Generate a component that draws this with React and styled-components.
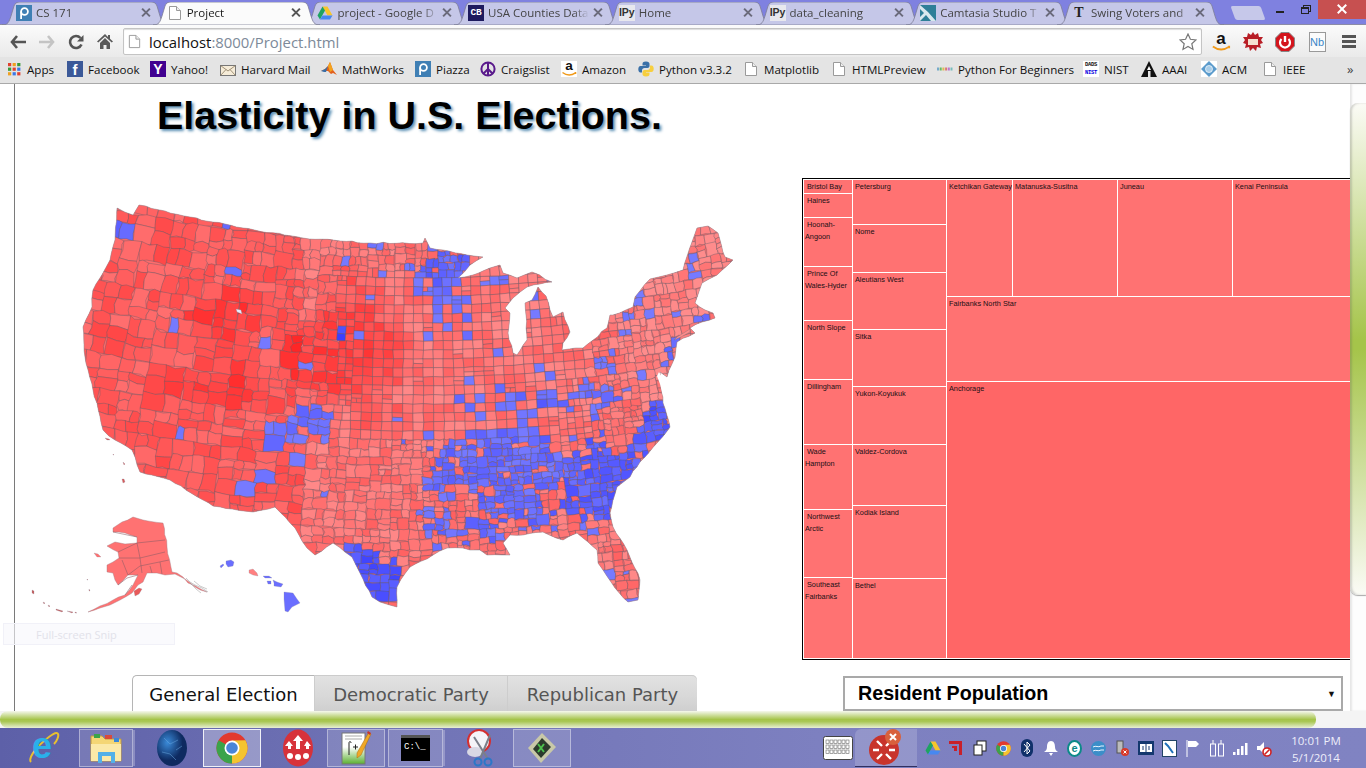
import styled, { createGlobalStyle } from 'styled-components';

const GlobalStyle = createGlobalStyle`
  html, body { margin: 0; padding: 0; overflow: hidden; }
  * { box-sizing: border-box; }
`;

/* ---------- styled parts ---------- */
const Screen = styled.div`
  width: 1366px;
  height: 768px;
  display: flex;
  flex-direction: column;
  overflow: hidden;
  background: #fff;
  font-family: 'Open Sans', 'Liberation Sans', sans-serif;
`;
const TabStrip = styled.div`
  height: 25px;
  flex: none;
  display: flex;
  padding: 2px 0 0 2px;
  background: #7f81e0;
  position: relative;
  border-bottom: 1px solid #8c8ca6;
`;
const Tab = styled.div`
  position: relative;
  flex: none;
  width: 167px;
  height: 23px;
  margin-right: -16.3px;
  padding: 0 19px 2px 14px;
  display: flex;
  align-items: center;
  gap: 4px;
  z-index: ${(p) => (p.$active ? 2 : 1)};
  color: ${(p) => (p.$active ? '#1a1a1a' : '#444')};
`;
const TabShape = styled.svg`
  position: absolute;
  left: 0;
  top: 0;
`;
const TabIcon = styled.span`
  position: relative;
  flex: none;
  width: 16px;
  height: 16px;
  display: flex;
`;
const TabTitle = styled.span`
  position: relative;
  flex: 1;
  min-width: 0;
  font-size: 11.5px;
  white-space: nowrap;
  overflow: hidden;
  -webkit-mask-image: linear-gradient(90deg, #000 85%, transparent);
  mask-image: linear-gradient(90deg, #000 85%, transparent);
`;
const TabClose = styled.span`
  position: relative;
  flex: none;
  width: 9px;
  height: 9px;
  &::before, &::after {
    content: '';
    position: absolute;
    left: 3.5px;
    top: -1px;
    width: 2px;
    height: 11px;
    background: ${(p) => (p.$active ? '#555' : '#6a6a7a')};
  }
  &::before { transform: rotate(45deg); }
  &::after { transform: rotate(-45deg); }
`;
const NewTab = styled.div`
  flex: none;
  width: 30px;
  height: 14px;
  margin: 4px 0 0 25px;
  background: #c6c8ea;
  border-radius: 2px;
  transform: skewX(20deg);
`;
const WindowControls = styled.div`
  margin-left: auto;
  margin-top: -2px;
  height: 19px;
  display: flex;
  align-items: flex-start;
  flex: none;
`;
const MinButton = styled.div`
  width: 8px;
  height: 2px;
  margin: 11px 17px 0 0;
  background: #222;
`;
const RestoreButton = styled.div`
  width: 8px;
  height: 7px;
  margin: 7px 9px 0 0;
  border: 1px solid #222;
  border-top-width: 2px;
  box-shadow: 2px -2px 0 -1px #7f81e0, 2px -2px 0 0 #222;
`;
const CloseButton = styled.div`
  width: 48px;
  height: 19px;
  background: #c75050;
  position: relative;
  &::before, &::after {
    content: '';
    position: absolute;
    left: 23px;
    top: 3px;
    width: 2px;
    height: 12px;
    background: #fff;
  }
  &::before { transform: rotate(45deg); }
  &::after { transform: rotate(-45deg); }
`;
const Toolbar = styled.div`
  height: 32px;
  flex: none;
  display: flex;
  align-items: center;
  padding: 1px 0 0 3px;
  background: linear-gradient(#fbfbfb, #eaeaea);
`;
const NavButton = styled.div`
  flex: none;
  width: 29px;
  display: flex;
  justify-content: center;
  align-items: center;
`;
const Omnibox = styled.div`
  flex: none;
  width: 1079px;
  height: 27px;
  margin: 0 3px 0 4px;
  padding: 0 4px 0 3px;
  display: flex;
  align-items: center;
  gap: 7px;
  background: #fff;
  border: 1px solid #c4c4c4;
  border-radius: 2px;
  box-shadow: inset 0 1px 1px #ddd;
`;
const UrlText = styled.span`
  flex: 1;
  font-size: 14.9px;
  color: #7d8a99;
  b { font-weight: 400; color: #111; }
`;
const ExtButton = styled.div`
  flex: none;
  width: 32px;
  display: flex;
  justify-content: center;
  align-items: center;
`;
const NbBox = styled.span`
  width: 17px;
  height: 20px;
  display: flex;
  align-items: center;
  justify-content: center;
  background: #fbfbfb;
  border: 1px solid #999;
  color: #3a86c8;
  font: 11px 'Liberation Sans', sans-serif;
`;
const BookmarkBar = styled.div`
  height: 27px;
  flex: none;
  display: flex;
  align-items: center;
  padding: 0 0 2px 6px;
  background: #e4e4e4;
  border-bottom: 1px solid #a9a9a9;
`;
const Bookmark = styled.div`
  flex: none;
  width: ${(p) => p.$w}px;
  display: flex;
  align-items: center;
  gap: 5px;
  font-size: 11.6px;
  color: #111;
  white-space: nowrap;
`;
const BookmarkIcon = styled.span`
  flex: none;
  width: 16px;
  height: 16px;
  display: flex;
`;
const Chevron = styled.span`
  margin-left: 25px;
  font-size: 13px;
  color: #444;
`;
const FavBox = styled.span`
  width: 16px;
  height: 16px;
  display: flex;
  align-items: ${(p) => p.$align || 'center'};
  justify-content: center;
  overflow: hidden;
  background: ${(p) => p.$bg};
  color: ${(p) => p.$fg};
  font-family: ${(p) => (p.$mono ? "'Liberation Mono', monospace" : p.$serif ? "'Liberation Serif', serif" : "'Liberation Sans', sans-serif")};
  font-size: ${(p) => p.$size};
  font-weight: 700;
  line-height: 1;
`;
const AmazonBox = styled.span`
  position: relative;
  width: ${(p) => p.$s}px;
  height: ${(p) => p.$s}px;
  display: flex;
  background: ${(p) => (p.$s > 16 ? 'transparent' : '#fff')};
`;
const AmazonLetter = styled.span`
  position: absolute;
  left: 0;
  right: 0;
  top: -3px;
  text-align: center;
  font: 700 ${(p) => p.$s * 0.85}px 'Liberation Sans', sans-serif;
  color: #111;
`;
const NistBox = styled.span`
  width: 16px;
  height: 16px;
  background: #fff;
  font: 700 5.500px/8px 'Liberation Mono', monospace;
  color: #111;
  display: flex;
  flex-direction: column;
  align-items: center;
  letter-spacing: -.3px;
`;
const NistLow = styled.span`
  color: #0000e0;
`;
const MiddleRow = styled.div`
  flex: 1;
  min-height: 0;
  display: flex;
`;
const Page = styled.div`
  position: relative;
  flex: none;
  width: 1350px;
  overflow: hidden;
  font-family: 'Liberation Sans', Arial, sans-serif;
`;
const Content = styled.div`
  margin-left: 14px;
  width: 1400px;
  height: 100%;
  border-left: 1px solid #7a7a7a;
`;
const Title = styled.h1`
  margin: 0;
  height: 94px;
  padding: 8px 0 0 142px;
  font-size: 39.5px;
  line-height: 46px;
  font-weight: 700;
  color: #000;
  text-shadow: 2px 2px 3px #5a8fb4;
`;
const Columns = styled.div`
  display: flex;
  align-items: flex-start;
`;
const LeftColumn = styled.div`
  flex: none;
  width: 787px;
`;
const MapSvg = styled.svg`
  display: block;
  width: 787px;
  height: 497px;
  filter: blur(0.35px);
`;
const ViewTabs = styled.div`
  margin-left: 117px;
  height: 36px;
  width: 565px;
  display: flex;
  border-radius: 5px 5px 0 0;
  overflow: hidden;
  background: linear-gradient(#e2e2e2, #d8d8d8 60%, #cfcfcf);
  box-shadow: inset 0 1px 0 #ccc;
`;
const ViewTab = styled.div`
  flex: none;
  width: ${(p) => p.$w}px;
  padding-top: 2px;
  display: flex;
  align-items: center;
  justify-content: center;
  font-family: 'DejaVu Sans', sans-serif;
  font-size: 18px;
  color: ${(p) => (p.$active ? '#111' : '#555')};
  background: ${(p) => (p.$active ? '#fff' : 'transparent')};
  border-left: 1px solid ${(p) => (p.$active ? '#b5b5b5' : '#cdcdcd')};
  border-top: 1px solid ${(p) => (p.$active ? '#b5b5b5' : 'transparent')};
  border-radius: ${(p) => (p.$active ? '5px 0 0 0' : '0')};
`;
const RightColumn = styled.div`
  flex: none;
  width: 560px;
`;
const Treemap = styled.div`
  width: 560px;
  height: 482px;
  display: flex;
  border: 1px solid #000;
  border-right: 0;
  background: #fff;
  padding: 1px 0 1px 1px;
`;
const TreeColumn = styled.div`
  flex: none;
  width: ${(p) => p.$w}px;
  display: flex;
  flex-direction: column;
`;
const TreeRow = styled.div`
  flex: none;
  height: ${(p) => p.$h}px;
  display: flex;
`;
const TreeCell = styled.div`
  flex: none;
  width: ${(p) => (p.$w ? p.$w + 'px' : 'auto')};
  height: ${(p) => (p.$h ? p.$h + 'px' : 'auto')};
  padding: 1px 0 0 ${(p) => (p.$indent ? '1px' : '2px')};
  background: ${(p) => (p.$strong ? '#ff6666' : '#ff7272')};
  border-right: 1px solid #fff;
  border-bottom: ${(p) => (p.$last ? 0 : '1px solid #fff')};
  font-size: 7.3px;
  line-height: 12px;
  color: #201014;
  overflow: hidden;
  white-space: ${(p) => (p.$indent ? 'normal' : 'nowrap')};
  text-indent: ${(p) => (p.$indent ? '2px' : 0)};
`;
const PopulationSelect = styled.div`
  margin: 16px 0 0 41px;
  width: 500px;
  height: 35px;
  display: flex;
  align-items: center;
  justify-content: space-between;
  padding: 0 5px 0 13px;
  border: 2px solid #a9a9a9;
  font-size: 19.7px;
  font-weight: 700;
  color: #000;
`;
const SelectArrow = styled.span`
  font-size: 9px;
  color: #111;
`;
const SnipHint = styled.div`
  position: absolute;
  left: 3px;
  top: 539px;
  width: 172px;
  height: 22px;
  padding-left: 32px;
  display: flex;
  align-items: center;
  font-family: 'Open Sans', sans-serif;
  font-size: 11px;
  color: #e2e2ea;
  background: rgba(246, 246, 252, 0.6);
  border: 1px solid #f1f1f8;
`;
const VScroll = styled.div`
  flex: none;
  width: 16px;
  padding-top: 19px;
  background: #fdfdfd;
  box-shadow: inset 2px 0 2px #e6e6e6;
`;
const VThumb = styled.div`
  height: 492px;
  border-radius: 8px 0 0 8px;
  background: linear-gradient(#fbfbf6, #a5c44a 48%, #a5c44a 50%, #fbfbf6);
  box-shadow: inset 2px 0 2px rgba(90, 90, 90, 0.25), 0 1px 1px #aaa;
`;
const HScroll = styled.div`
  height: 17px;
  flex: none;
  display: flex;
  background: #f4f4f4;
`;
const HThumb = styled.div`
  width: 1316px;
  height: 100%;
  border-radius: 8px;
  background: linear-gradient(#f6f8ee, #a5c44a 50%, #a9c755 62%, #e8efd4);
`;
const Taskbar = styled.div`
  height: 40px;
  flex: none;
  display: flex;
  align-items: center;
  color: #eef;
  background: linear-gradient(90deg, #5d60a8, #7174b6 30%, #7d80c0 60%, #8083c2);
`;
const TaskButton = styled.div`
  flex: none;
  width: ${(p) => p.$w}px;
  height: 38px;
  margin-left: ${(p) => p.$ml}px;
  display: flex;
  align-items: center;
  justify-content: center;
  ${(p) => p.$state === 'active' && `
    background: rgba(255,255,255,.3);
    border: 1px solid rgba(255,255,255,.85);
  `}
  ${(p) => (p.$state === 'open' || p.$state === 'stack') && `
    background: rgba(255,255,255,.14);
    border: 1px solid rgba(255,255,255,.4);
  `}
  ${(p) => p.$state === 'stack' && `
    box-shadow: 3px 0 0 -1px rgba(255,255,255,.25);
  `}
`;
const IeBox = styled.span`
  position: relative;
  width: 32px;
  height: 34px;
  display: flex;
`;
const IeLetter = styled.span`
  position: absolute;
  left: 4px;
  top: -6px;
  font: 700 36px 'Liberation Sans', sans-serif;
  color: #2ab0ea;
`;
const CmdBox = styled.span`
  width: 29px;
  height: 26px;
  padding: 4px 0 0 3px;
  background: #000;
  border-top: 3px solid #555;
  color: #fff;
  font: 9px/10px 'Liberation Mono', monospace;
`;
const TraySection = styled.div`
  margin-left: auto;
  display: flex;
  align-items: center;
  height: 100%;
`;
const KeyboardSlot = styled.div`
  flex: none;
  width: 34px;
  display: flex;
  justify-content: center;
`;
const ClusterBox = styled.span`
  width: 62px;
  height: 38px;
  display: flex;
  justify-content: center;
  align-items: center;
  background: rgba(255, 255, 255, 0.17);
  border-radius: 6px 0 0 0;
  border-bottom: 1px solid #303060;
`;
const TrayList = styled.div`
  margin-left: 4px;
  display: flex;
`;
const TrayItem = styled.div`
  flex: none;
  width: 23.7px;
  height: 20px;
  display: flex;
  align-items: center;
  justify-content: center;
`;
const TrayDisc = styled.span`
  width: 15px;
  height: 17px;
  border-radius: 50%;
  display: flex;
  align-items: center;
  justify-content: center;
  background: #fff;
  border: 2px solid ${(p) => p.$bg};
  color: ${(p) => p.$bg};
  font: 700 11px 'Liberation Sans', sans-serif;
`;
const Clock = styled.div`
  flex: none;
  width: 74px;
  margin: 0 13px 0 3px;
  padding-top: 2px;
  text-align: center;
  font-size: 11.5px;
  line-height: 17px;
  color: #eeeefa;
`;

/* ---------- map generation ---------- */
const hash = (a, b) => {
  let h = (Math.round(a) * 374761393 + Math.round(b) * 668265263) >>> 0;
  h = (Math.imul(h ^ (h >>> 13), 1274126177)) >>> 0;
  return ((h ^ (h >>> 16)) >>> 0) / 4294967296;
};

const CONUS = [[117,208],[133,215],[139,205],[190,217],[243,228],[303,238],[370,243],[423,243],[425,238],[430,248],[443,250],[467,255],[483,257],[470,265],[458,278],[473,275],[490,268],[500,265],[503,273],[517,278],[532,272],[552,282],[540,284],[527,287],[513,298],[505,308],[510,313],[508,333],[513,353],[517,355],[527,340],[525,303],[532,300],[538,287],[546,296],[550,310],[553,317],[563,312],[570,332],[563,343],[562,350],[583,348],[607,328],[610,315],[613,315],[633,307],[635,297],[650,279],[667,275],[683,270],[692,242],[697,228],[708,226],[718,233],[725,257],[733,260],[717,275],[702,283],[695,303],[705,310],[713,313],[715,318],[702,322],[690,328],[695,333],[677,342],[675,357],[667,377],[660,372],[663,403],[670,427],[668,430],[657,443],[640,462],[630,477],[617,487],[610,513],[613,527],[627,550],[640,580],[638,600],[628,602],[615,588],[603,570],[598,563],[597,550],[588,542],[577,533],[563,540],[543,532],[523,535],[510,535],[503,543],[510,555],[487,555],[480,550],[470,550],[463,548],[447,548],[433,555],[410,567],[397,587],[397,607],[380,602],[372,597],[360,573],[352,557],[333,543],[315,555],[307,548],[295,528],[275,507],[253,512],[213,506],[170,480],[140,472],[132,450],[115,440],[103,430],[93,390],[85,357],[83,327],[92,307],[93,290],[103,273],[110,260],[115,240]];
const ALASKA = [[113,528],[122,522],[133,517],[143,520],[163,523],[167,547],[172,572],[177,573],[183,577],[188,583],[207,592],[195,587],[185,579],[175,574],[165,575],[157,573],[147,573],[143,582],[138,585],[132,593],[120,600],[110,605],[100,608],[88,612],[100,606],[113,600],[125,595],[133,585],[138,575],[128,575],[118,585],[115,580],[113,573],[107,572],[107,565],[113,562],[119,558],[118,552],[107,546],[115,542],[125,544],[137,543],[137,537],[125,533],[113,532]];
const ISLANDS = [
  { d: 'M226 561l5-1 3 2-1 4-5 1-2-3z', fill: '#6a6eff' },
  { d: 'M220 566l3-2 1 1-3 3z', fill: '#6a6eff' },
  { d: 'M249 570l4-1 4 4 1 3-5-1-4-2z', fill: '#ff8080' },
  { d: 'M263 576l6 0 3 2-7 0z', fill: '#6a6eff' },
  { d: 'M267 581l4 0 0 3-3 0z', fill: '#6a6eff' },
  { d: 'M273 580l4 2 6 2-2 3-7-1 0-3z', fill: '#6a6eff' },
  { d: 'M284 592l9 1 4 6 3 4-8 4-4 5-3-1-1-12z', fill: '#6a6eff' },
  { d: 'M94 553l4 1 3 3-4 0z', fill: '#ff7070' },
  { d: 'M134 591l5-3 3 1-3 5-4 2z', fill: '#e85a5a' },
  { d: 'M32 590l2 1 0 3-2-1zM43 602l2 1-1 1zM48 605l2 1-1 1zM56 609l7 2-1 1-6-2zM67 611l6 1-1 1zM75 612l2 1-2 0zM87 579l1 1-1 0zM89 589l1 2-1 0z', fill: '#c85a5a' },
  { d: 'M105 438l4 1 1 1-3 0zM113 454l1 1-1 0zM123 462l2 2-1 1zM122 479l2 0 1 3-2 1z', fill: '#d85a5a' },
];
const ALASKA_LINES = 'M113 532L137 537M118 552L137 543L165 540M137 543L140 558L119 558M140 558L165 552M140 558L142 573M128 575L140 566L169 560M150 566L152 573M160 562L162 574M122 560L128 575M118 585L127 578L138 575M125 595L132 585';

const toPath = (pts) => {
  const out = [];
  pts.forEach((p, i) => {
    const q = pts[(i + 1) % pts.length];
    out.push(p);
    const n = Math.floor(Math.hypot(q[0] - p[0], q[1] - p[1]) / 6);
    for (let k = 1; k < n; k++) {
      const t = k / n;
      out.push([
        p[0] + (q[0] - p[0]) * t + (hash(p[0] * 7 + k, q[1]) - 0.5) * 1.4,
        p[1] + (q[1] - p[1]) * t + (hash(p[1] * 5, q[0] + k) - 0.5) * 1.4,
      ]);
    }
  });
  return 'M' + out.map((p) => p[0].toFixed(1) + ' ' + p[1].toFixed(1)).join('L') + 'Z';
};

const warp = (u, v) => {
  const t = (u - 420) / 1400;
  const r = 1400 + v - 200;
  return [420 + r * Math.sin(t), r * Math.cos(t) - 1200];
};

const inPoly = (x, y, poly) => {
  let c = false;
  for (let i = 0, j = poly.length - 1; i < poly.length; j = i++) {
    const [xi, yi] = poly[i];
    const [xj, yj] = poly[j];
    if (yi > y !== yj > y && x < ((xj - xi) * (y - yi)) / (yj - yi) + xi) c = !c;
  }
  return c;
};

const isPlains = (x, y) => x > 335 && x < 590 && y > 270 && y < 440;

const targetSize = (x, y) => {
  if (x < 210) return 16;
  if (x < 290) return 14;
  if (x < 335) return 11;
  if (y > 450 && x < 420) return 9.5;
  if (x > 640 && y < 330) return 10;
  if (y < 275) return 8.5;
  if (isPlains(x, y)) return 8.4;
  return 8;
};

// x, y, rx, ry, chance, darkness
const BLUE = [
  [600,480,48,55,.95,.35],[655,425,22,26,.88,.45],[490,470,75,50,.92,.2],[440,510,35,30,.75,.15],[470,530,45,15,.8,.2],
  [520,510,35,25,.72,.25],[560,465,30,25,.82,.2],[530,440,50,28,.78,.2],[540,405,45,18,.62,.25],[605,365,15,12,.88,.05],[600,395,30,20,.62,.1],
  [373,578,28,28,1,.55],[355,555,12,12,.95,.45],[310,425,25,22,.78,.1],[283,432,20,14,.92,.15],[445,268,30,22,.97,.3],
  [425,285,30,25,.68,.05],[445,300,25,15,.62,.1],[490,280,25,10,.62,.05],[120,235,10,28,.75,.2],[100,370,8,12,.8,.1],
  [345,333,7,7,1,.6],[360,335,7,5,.9,.05],[232,272,7,6,.8,.05],[378,245,4,4,1,.05],[243,480,5,13,.85,.1],
  [300,520,10,15,.9,.1],[698,318,12,8,.7,.05],[672,350,10,20,.4,.2],[700,285,6,8,.5,.05],[625,568,6,7,.75,.05],
  [585,530,25,8,.78,.1],[640,445,14,12,.78,.3],
];
const RED = [[550,420,25,10,.15],[463,505,14,18,.2],[405,535,25,25,.15],[625,575,22,32,.3],[580,445,25,12,.4],[405,470,18,14,.5]];
const HOT = [[345,355,70,55,.42],[350,290,42,35,.22],[225,320,45,35,.25],[215,385,50,30,.25],[380,420,30,25,.18]];

const fall = (x, y, b) => {
  const d = ((x - b[0]) / b[2]) ** 2 + ((y - b[1]) / b[3]) ** 2;
  return d < 1 ? 1 - d * d : 0;
};

const cellColor = (x, y, seed) => {
  let p = x > 420 ? 0.07 : 0.012;
  let dark = 0.05;
  BLUE.forEach((b) => {
    const v = b[4] * fall(x, y, b);
    if (v > p) { p = v; dark = b[5]; }
  });
  RED.forEach((b) => { if (fall(x, y, b) > 0.3) p *= b[4]; });
  const n = hash(seed * 991, seed * 17);
  const n2 = hash(seed * 13, seed * 577);
  if (n < p) {
    const d = Math.min(1, Math.max(0, dark + (n2 - 0.55) * 0.4));
    return `rgb(${Math.round(118 - 80 * d)},${Math.round(122 - 80 * d)},255)`;
  }
  let l = x < 300 ? 0.42 : x > 620 && y < 400 ? 0.08 : 0.2;
  HOT.forEach((b) => { l += b[4] * fall(x, y, b); });
  l += (n2 - 0.5) * 0.34;
  l = Math.min(1, Math.max(0, l));
  const g = Math.round(140 - 118 * l);
  return `rgb(255,${g},${g})`;
};

const buildCells = () => {
  const cells = [];
  let seed = 1;
  const point = (u, v, amp) => {
    const [x, y] = warp(u, v);
    const k1 = u * 10;
    const k2 = v * 10;
    return [x + (hash(k1, k2) - 0.5) * amp, y + (hash(k2 + 3, k1 + 9) - 0.5) * amp];
  };
  const leaf = (u0, v0, u1, v1) => {
    const [x, y] = warp((u0 + u1) / 2, (v0 + v1) / 2);
    const plains = isPlains(x, y);
    const amp = plains ? 0.8 : x < 335 ? 3 : 2;
    const um = (u0 + u1) / 2;
    const vm = (v0 + v1) / 2;
    const pts = plains
      ? [[u0, v0], [u1, v0], [u1, v1], [u0, v1]]
      : [[u0, v0], [um, v0], [u1, v0], [u1, vm], [u1, v1], [um, v1], [u0, v1], [u0, vm]];
    const poly = pts.map((p) => point(p[0], p[1], amp));
    if (!poly.some((p) => inPoly(p[0], p[1], CONUS)) && !inPoly(x, y, CONUS)) return;
    seed += 1;
    cells.push({
      d: 'M' + poly.map((p) => p[0].toFixed(1) + ' ' + p[1].toFixed(1)).join('L') + 'Z',
      fill: cellColor(x, y, seed),
    });
  };
  const split = (u0, v0, u1, v1) => {
    const [x, y] = warp((u0 + u1) / 2, (v0 + v1) / 2);
    const t = targetSize(x, y);
    const w = u1 - u0;
    const h = v1 - v0;
    const r = hash(u0 * 3 + v1 * 7, v0 * 3 + u1 * 5);
    const limit = t * (1.05 + 0.4 * r);
    if (w < limit && h < limit) { leaf(u0, v0, u1, v1); return; }
    const f = isPlains(x, y) ? 0.5 : 0.36 + 0.28 * hash(u1 * 11, v1 * 13);
    if (w > h || (w === h && r > 0.5)) {
      const m = u0 + w * f;
      split(u0, v0, m, v1);
      split(m, v0, u1, v1);
    } else {
      const m = v0 + h * f;
      split(u0, v0, u1, m);
      split(u0, m, u1, v1);
    }
  };
  for (let u = 36; u < 800; u += 72) {
    for (let v = 170; v < 650; v += 72) split(u, v, u + 72, v + 72);
  }
  return cells;
};

const MAP_CELLS = buildCells();
const CONUS_PATH = toPath(CONUS);
const ALASKA_PATH = toPath(ALASKA);

const CountyMap = () => (
  <MapSvg viewBox="15 178 787 497">
    <defs>
      <clipPath id="conus"><path d={CONUS_PATH} /></clipPath>
    </defs>
    <path d={CONUS_PATH} fill="#ff6c6c" />
    <g clipPath="url(#conus)" stroke="#5c5c68" strokeWidth="0.55" strokeOpacity="0.7">
      {MAP_CELLS.map((c, i) => <path key={i} d={c.d} fill={c.fill} />)}
    </g>
    <path d={CONUS_PATH} fill="none" stroke="#8c8c94" strokeWidth="0.5" />
    <path d="M236 309l5 1 1 4-5-2z" fill="#e8ecff" stroke="#888" strokeWidth="0.3" />
    <path d="M659 372l4 7 1 14 3 6-4-3-3-12-3-8z" fill="#fff" />
    <path d="M690 329l-13 8-3 3 7-3 9-5z" fill="#ff8a8a" stroke="#777" strokeWidth="0.4" />
    <path d={ALASKA_PATH} fill="#ff7272" stroke="#a07a80" strokeWidth="0.4" />
    <path d={ALASKA_LINES} fill="none" stroke="#8c5c64" strokeWidth="0.55" />
    <path d="M186 578l4 4 5 3 7 3 6 4M190 583l6 6 5 4M194 581l6 5 7 3" fill="none" stroke="#999" strokeWidth="0.5" />
    {ISLANDS.map((s, i) => <path key={i} d={s.d} fill={s.fill} stroke="#8a8a9a" strokeWidth="0.25" />)}
  </MapSvg>
);

/* ---------- icons ---------- */
const Doc = ({ s = 16 }) => (
  <svg width={s} height={s} viewBox="0 0 16 16">
    <path d="M2.5 1.5h7l4 4v9h-11z" fill="#fff" stroke="#9a9a9a" />
    <path d="M9.5 1.5v4h4" fill="#eee" stroke="#9a9a9a" />
  </svg>
);
const PiazzaIcon = () => (
  <svg width="16" height="16" viewBox="0 0 16 16">
    <rect width="16" height="16" fill="#3f7fb4" />
    <circle cx="8.5" cy="6.5" r="3.4" fill="none" stroke="#fff" strokeWidth="1.8" />
    <path d="M5.1 6.5V14" stroke="#fff" strokeWidth="1.8" />
  </svg>
);
const DriveIcon = ({ s = 16 }) => (
  <svg width={s} height={s} viewBox="0 0 16 16">
    <path d="M5.5 1.5h5l5 9h-5z" fill="#f7c52b" />
    <path d="M5.5 1.5l-5 9 2.5 4 5-9z" fill="#1ea362" />
    <path d="M3 14.500h10l2.500-4h-10z" fill="#4688f1" />
  </svg>
);
const CbIcon = () => (
  <FavBox $bg="#1d1a5e" $fg="#fff" $size="9.5px" $mono>CB</FavBox>
);
const IPyIcon = () => (
  <FavBox $bg="#e8e8ee" $fg="#333" $size="10.5px">IPy</FavBox>
);
const CamtasiaIcon = () => (
  <svg width="16" height="16" viewBox="0 0 16 16">
    <rect width="16" height="16" fill="#2e7f98" />
    <path d="M0 0l8 7 8 9H11L6 10 0 16V12l4-4-4-4z" fill="#d8e8ee" />
  </svg>
);
const NytIcon = () => <FavBox $bg="transparent" $fg="#222" $size="14px" $serif>T</FavBox>;
const FacebookIcon = () => <FavBox $bg="#3b5998" $fg="#fff" $size="15px" $align="flex-end">f</FavBox>;
const YahooIcon = () => <FavBox $bg="#400090" $fg="#fff" $size="14px">Y</FavBox>;
const AppsIcon = () => (
  <svg width="16" height="16" viewBox="0 0 16 16">
    {['#e0402f', '#f0a020', '#3a9a3a', '#3a9a3a', '#e0402f', '#3b78e7', '#f0a020', '#3b78e7', '#e0402f'].map((c, i) => (
      <rect key={i} x={2 + (i % 3) * 4.6} y={2 + Math.floor(i / 3) * 4.6} width="3.2" height="3.2" fill={c} />
    ))}
  </svg>
);
const MailIcon = () => (
  <svg width="16" height="16" viewBox="0 0 16 16">
    <rect x="0.5" y="4.500" width="15" height="10" fill="#f6ecd8" stroke="#777" />
    <path d="M.5 4.500l7.500 5.500 7.500-5.500M.5 14.500l5.500-6M15.500 14.500l-5.500-6" fill="none" stroke="#8a7a60" strokeWidth=".8" />
  </svg>
);
const MathWorksIcon = () => (
  <svg width="16" height="16" viewBox="0 0 16 16">
    <path d="M0 10l4-2 3-3 2-4 3 8 4 5-4-2-2 1-3-3-3 0z" fill="#e2611e" />
    <path d="M0 10l4-2 3-3-2 6-2 0z" fill="#3b6ea5" />
    <path d="M9 1l3 8-3 2-2-6z" fill="#f3a31e" />
  </svg>
);
const PeaceIcon = () => (
  <svg width="16" height="16" viewBox="0 0 16 16" fill="none" stroke="#5a1a8c" strokeWidth="2">
    <circle cx="8" cy="8" r="6.600" />
    <path d="M8 1.500v13M8 8l-4.700 4.700M8 8l4.700 4.700" />
  </svg>
);
const AmazonIcon = ({ s = 16 }) => (
  <AmazonBox $s={s}>
    <AmazonLetter $s={s}>a</AmazonLetter>
    <svg width={s} height={s} viewBox="0 0 16 16">
      <path d="M1.500 11.500c4 3 9 3 13 .3M14.500 11v2" fill="none" stroke="#f09a1a" strokeWidth="1.500" />
    </svg>
  </AmazonBox>
);
const PythonIcon = () => (
  <svg width="16" height="16" viewBox="0 0 16 16">
    <path d="M8 .5c-3 0-3.500 1-3.500 2.500v1.500H8V5H2.500C1 5 .3 6.500.3 8.200s.7 3.300 2.200 3.300H4V9.500c0-1.500 1-2.500 2.500-2.500h3c1 0 2-.8 2-2V3C11.500 1.500 10.500.5 8 .5z" fill="#3a70a8" />
    <path d="M8 15.500c3 0 3.500-1 3.500-2.500v-1.500H8V11h5.500c1.500 0 2.200-1.500 2.200-3.200S15 4.500 13.500 4.500H12v2c0 1.500-1 2.500-2.500 2.500h-3c-1 0-2 .8-2 2V13c0 1.500 1 2.500 3.500 2.500z" fill="#f7cf3e" />
  </svg>
);
const BeginnersIcon = () => (
  <svg width="16" height="16" viewBox="0 0 16 16">
    {['#7ac', '#6b6', '#db5', '#d77', '#b7c', '#7bb'].map((c, i) => (
      <rect key={i} x={i * 2.700} y="6.500" width="2" height="3" fill={c} />
    ))}
  </svg>
);
const NistIcon = () => (
  <NistBox><span>DADS</span><NistLow>NIST</NistLow></NistBox>
);
const AaaiIcon = () => (
  <svg width="16" height="16" viewBox="0 0 16 16">
    <path d="M8 0l8 16H9.500V10H7v6H0z" fill="#111" />
    <path d="M8 5l-2 4h4z" fill="#fff" />
  </svg>
);
const AcmIcon = () => (
  <svg width="16" height="16" viewBox="0 0 16 16">
    <rect width="16" height="16" fill="#fff" />
    <path d="M8 0l8 8-8 8-8-8z" fill="#5b9bcc" />
    <circle cx="8" cy="8" r="3.500" fill="#a8cde8" stroke="#fff" strokeWidth=".7" />
  </svg>
);

const ChromeIcon = ({ s = 16 }) => (
  <svg width={s} height={s} viewBox="0 0 32 32">
    <circle cx="16" cy="16" r="15.500" fill="#e23a2e" />
    <path d="M16 16L2.600 8.200A15.500 15.500 0 0 0 16 31.500z" fill="#3ba34a" />
    <path d="M16 16l0 15.500A15.500 15.500 0 0 0 29.400 8.200L16 8.500z" fill="#f4c430" />
    <circle cx="16" cy="16" r="7.500" fill="#fff" />
    <circle cx="16" cy="16" r="5.800" fill="#4a85d8" />
  </svg>
);
const IeIcon = () => (
  <IeBox>
    <IeLetter>e</IeLetter>
    <svg width="32" height="34" viewBox="0 0 32 34">
      <path d="M3 31c-3-3 4-14 13-21C23 4 29 0 30 3c1 2-1 7-4 10" fill="none" stroke="#e8c030" strokeWidth="2" />
    </svg>
  </IeBox>
);
const FolderIcon = () => (
  <svg width="34" height="32" viewBox="0 0 34 32">
    <path d="M2 4h11l3 3h16v22H2z" fill="#f4d675" stroke="#c09a40" />
    <path d="M2 12h30v17H2z" fill="#fbe9a8" />
    <rect x="5" y="2" width="6" height="4" fill="#3aa34a" />
    <rect x="16" y="3" width="7" height="4" fill="#d84a3a" />
    <rect x="25" y="6" width="5" height="4" fill="#3b88d8" />
    <path d="M9 31V20h17v11h-4v-7H13v7z" fill="#52b0e8" />
  </svg>
);
const GlobeIcon = () => (
  <svg width="32" height="36" viewBox="0 0 32 36">
    <defs>
      <radialGradient id="gl" cx="35%" cy="35%"><stop offset="0" stopColor="#3a8ad8" /><stop offset="1" stopColor="#0e2a60" /></radialGradient>
    </defs>
    <ellipse cx="16" cy="18" rx="15" ry="18" fill="url(#gl)" />
    <path d="M8 8l6 6 8-4M6 22l8 2 6 6M20 20l6-4" stroke="#6aa8e0" strokeWidth=".5" fill="none" />
  </svg>
);
const ArrowsAppIcon = () => (
  <svg width="32" height="38" viewBox="0 0 32 38">
    <ellipse cx="16" cy="19" rx="15" ry="18.500" fill="#d7323a" />
    <path d="M16 6l5 6h-3v8h-4v-8h-3zM7 12l4 5H9v3H6v-3H3zM25 12l4 5h-2v3h-3v-3h-2z" fill="#fff" />
    <circle cx="8" cy="27" r="3" fill="#fff" /><circle cx="16" cy="28" r="3" fill="#fff" /><circle cx="24" cy="27" r="3" fill="#fff" />
  </svg>
);
const NotepadIcon = () => (
  <svg width="32" height="34" viewBox="0 0 32 34">
    <defs>
      <linearGradient id="np" x1="0" y1="0" x2="0" y2="1"><stop offset=".45" stopColor="#fff" /><stop offset="1" stopColor="#5cb030" /></linearGradient>
    </defs>
    <rect x="2" y="2" width="23" height="31" fill="url(#np)" stroke="#777" />
    <path d="M5 5h17M5 8h17" stroke="#aaa" />
    <path d="M9 24V12c0-2 2-2 2 0M13 16h5M15.500 13.500v5" fill="none" stroke="#222" />
    <path d="M29 1l2 2-10 21-4 3 0-5z" fill="#f0a828" stroke="#a86c10" strokeWidth=".5" />
    <path d="M28 0l3 2-1 2-3-2z" fill="#c8382e" />
  </svg>
);
const CmdIcon = () => <CmdBox>C:\_</CmdBox>;
const SnipIcon = () => (
  <svg width="32" height="38" viewBox="0 0 32 38">
    <circle cx="13" cy="12" r="11" fill="#f4f4f8" stroke="#d43030" strokeWidth="2" />
    <ellipse cx="9" cy="23" rx="8" ry="5" fill="#d8d8e4" />
    <path d="M8 8l14 22M24 6L14 30" stroke="#7a7f8a" strokeWidth="2" />
    <circle cx="22" cy="33" r="3.500" fill="none" stroke="#2b78c8" strokeWidth="2" />
    <circle cx="12" cy="33" r="3.500" fill="none" stroke="#2b78c8" strokeWidth="2" />
  </svg>
);
const ExcelIcon = () => (
  <svg width="30" height="32" viewBox="0 0 30 32">
    <path d="M15 1l14 14-15 16L1 16z" fill="#c8c8a8" />
    <path d="M15 6l9 9-10 11-8-9z" fill="#2c3a2c" />
    <path d="M11 12l6 8M17 12l-6 8" stroke="#4cc04c" strokeWidth="2" />
  </svg>
);
const ClusterIcon = () => (
  <ClusterBox>
    <svg width="34" height="38" viewBox="0 0 34 38">
      <circle cx="15" cy="21" r="15" fill="#c8342c" />
      <path d="M8 12l5 5M8 30l5-5M22 12l-5 5M22 30l-5-5M4 21h6M26 21h-6" stroke="#fff" strokeWidth="2.400" />
      <circle cx="24" cy="8" r="8" fill="#d8603c" />
      <path d="M21 5l6 6M27 5l-6 6" stroke="#fff" strokeWidth="2" />
    </svg>
  </ClusterBox>
);
const KeyboardIcon = () => (
  <svg width="30" height="24" viewBox="0 0 30 24">
    <rect x=".5" y=".5" width="29" height="23" rx="2" fill="#fff" stroke="#444" />
    {[4, 9, 14].map((y) => [3, 7, 11, 15, 19, 23].map((x) => (
      <rect key={x + '-' + y} x={x} y={y} width="3" height="3.500" fill="none" stroke="#666" strokeWidth=".6" />
    )))}
  </svg>
);
const Star = () => (
  <svg width="18" height="18" viewBox="0 0 18 18">
    <path d="M9 1l2.400 5.300 5.600.6-4.200 3.800 1.200 5.700L9 13.500 4 16.400l1.200-5.700L1 6.900l5.600-.6z" fill="#fff" stroke="#777" strokeWidth="1.200" />
  </svg>
);

const TRAY = [
  <DriveIcon s={16} key="a" />,
  <svg key="b" width="14" height="16" viewBox="0 0 14 16"><path d="M0 1h13v14h-3V4H0zM3 6h5v5H5V8H3z" fill="#c8202a" /></svg>,
  <svg key="c" width="14" height="16" viewBox="0 0 14 16"><rect x="4" y="1" width="9" height="10" fill="#fff" stroke="#222" /><rect x="1" y="5" width="8" height="10" fill="#fff" stroke="#222" /></svg>,
  <ChromeIcon s={15} key="d" />,
  <svg key="e" width="12" height="18" viewBox="0 0 12 18"><rect width="12" height="18" rx="6" fill="#10306a" /><path d="M3 5l6 7-3 3V3l3 3-6 7" fill="none" stroke="#fff" /></svg>,
  <svg key="f" width="14" height="16" viewBox="0 0 14 16"><path d="M7 1c3 0 4 3 4 6 0 2 1 4 3 5H0c2-1 3-3 3-5 0-3 1-6 4-6zM5 13h4l-2 3z" fill="#fff" /></svg>,
  <TrayDisc key="g" $bg="#0c8a88">e</TrayDisc>,
  <svg key="h" width="15" height="15" viewBox="0 0 15 15"><circle cx="7.500" cy="7.500" r="7.500" fill="#3c8ec8" /><path d="M2 6c3-2 5 1 8-1l3 0M2 10c3-2 5 1 8-1l3 0" stroke="#e8f4ff" fill="none" /></svg>,
  <svg key="i" width="14" height="16" viewBox="0 0 14 16"><rect x="2" y="1" width="6" height="12" fill="#bbb" stroke="#555" /><circle cx="10" cy="12" r="4" fill="#d83a2a" /><path d="M8.500 10.500l3 3M11.500 10.500l-3 3" stroke="#fff" /></svg>,
  <svg key="j" width="16" height="14" viewBox="0 0 16 14"><rect width="16" height="14" fill="#14386e" /><rect x="2" y="3" width="12" height="8" fill="#fff" /><path d="M8 3v8M5 5v4M11 5v4" stroke="#14386e" /></svg>,
  <svg key="k" width="15" height="17" viewBox="0 0 15 17"><rect x=".5" y=".5" width="14" height="16" fill="#fff" stroke="#246" /><path d="M3 3l3 3 5 7" stroke="#2070b8" strokeWidth="2" fill="none" /></svg>,
  <svg key="l" width="15" height="17" viewBox="0 0 15 17"><path d="M1 0v17" stroke="#fff" /><path d="M2 1h8l3 3-3 3H2z" fill="#fff" /></svg>,
  <svg key="m" width="16" height="17" viewBox="0 0 16 17" fill="none" stroke="#fff"><rect x="1.500" y="4" width="5" height="12" /><rect x="9.500" y="4" width="5" height="12" /><path d="M4 0v4M12 0v4" /></svg>,
  <svg key="n" width="17" height="15" viewBox="0 0 17 15" fill="#fff"><rect x="1" y="11" width="2.500" height="3" /><rect x="5" y="8" width="2.500" height="6" /><rect x="9" y="5" width="2.500" height="9" /><rect x="13" y="2" width="2.500" height="12" /></svg>,
  <svg key="o" width="16" height="17" viewBox="0 0 16 17"><path d="M1 6h3l4-4v12L4 10H1z" fill="#fff" /><circle cx="11" cy="12" r="4" fill="#fff" stroke="#d02020" strokeWidth="1.600" /><path d="M8.500 14.500l5-5" stroke="#d02020" strokeWidth="1.600" /></svg>,
];

/* ---------- data ---------- */
const TABS = [
  { title: 'CS 171', icon: <PiazzaIcon /> },
  { title: 'Project', icon: <Doc />, active: true },
  { title: 'project - Google D', icon: <DriveIcon /> },
  { title: 'USA Counties Data', icon: <CbIcon /> },
  { title: 'Home', icon: <IPyIcon /> },
  { title: 'data_cleaning', icon: <IPyIcon /> },
  { title: 'Camtasia Studio T', icon: <CamtasiaIcon /> },
  { title: 'Swing Voters and', icon: <NytIcon /> },
];

const BOOKMARKS = [
  { label: 'Apps', w: 61, icon: <AppsIcon /> },
  { label: 'Facebook', w: 83, icon: <FacebookIcon /> },
  { label: 'Yahoo!', w: 70, icon: <YahooIcon /> },
  { label: 'Harvard Mail', w: 101, icon: <MailIcon /> },
  { label: 'MathWorks', w: 94, icon: <MathWorksIcon /> },
  { label: 'Piazza', w: 65, icon: <PiazzaIcon /> },
  { label: 'Craigslist', w: 81, icon: <PeaceIcon /> },
  { label: 'Amazon', w: 77, icon: <AmazonIcon /> },
  { label: 'Python v3.3.2', w: 105, icon: <PythonIcon /> },
  { label: 'Matplotlib', w: 88, icon: <Doc /> },
  { label: 'HTMLPreview', w: 106, icon: <Doc /> },
  { label: 'Python For Beginners', w: 146, icon: <BeginnersIcon /> },
  { label: 'NIST', w: 58, icon: <NistIcon /> },
  { label: 'AAAI', w: 60, icon: <AaaiIcon /> },
  { label: 'ACM', w: 61, icon: <AcmIcon /> },
  { label: 'IEEE', w: 60, icon: <Doc /> },
];

const TASKS = [
  { ml: 15, w: 58, icon: <IeIcon /> },
  { ml: 6, w: 54, state: 'stack', icon: <FolderIcon /> },
  { ml: 10, w: 58, icon: <GlobeIcon /> },
  { ml: 2, w: 58, state: 'active', icon: <ChromeIcon s={32} /> },
  { ml: 8, w: 58, icon: <ArrowsAppIcon /> },
  { ml: 0, w: 58, state: 'open', icon: <NotepadIcon /> },
  { ml: 3, w: 55, state: 'stack', icon: <CmdIcon /> },
  { ml: 10, w: 58, icon: <SnipIcon /> },
  { ml: 2, w: 58, state: 'open', icon: <ExcelIcon /> },
];

const COL_ONE = [
  { h: 14, text: 'Bristol Bay' }, { h: 24, text: 'Haines' }, { h: 49, text: 'Hoonah-Angoon' },
  { h: 54, text: 'Prince Of Wales-Hyder' }, { h: 59, text: 'North Slope' }, { h: 65, text: 'Dillingham' },
  { h: 65, text: 'Wade Hampton' }, { h: 68, text: 'Northwest Arctic' }, { h: 80, text: 'Southeast Fairbanks' },
];
const COL_TWO = [
  { h: 45, text: 'Petersburg' }, { h: 48, text: 'Nome' }, { h: 57, text: 'Aleutians West' }, { h: 57, text: 'Sitka' },
  { h: 58, text: 'Yukon-Koyukuk' }, { h: 61, text: 'Valdez-Cordova' }, { h: 73, text: 'Kodiak Island' }, { h: 79, text: 'Bethel' },
];
const TOP_ROW = [
  { w: 66, text: 'Ketchikan Gateway' }, { w: 105, text: 'Matanuska-Susitna' }, { w: 115, text: 'Juneau' }, { w: 130, text: 'Kenai Peninsula' },
];

const App = () => (
  <Screen>
    <GlobalStyle />
    <TabStrip>
      {TABS.map((t) => (
        <Tab key={t.title} $active={t.active}>
          <TabShape width="167" height="23" viewBox="0 0 167 23">
            <path
              d="M0 23C6 23 7 20 9 14L12 4C13 1 15 0 18 0H149C152 0 154 1 155 4L158 14C160 20 161 23 167 23Z"
              fill={t.active ? '#fbfbfb' : '#c5c7e8'}
              stroke="#7c7d96"
              strokeWidth="0.8"
            />
          </TabShape>
          <TabIcon>{t.icon}</TabIcon>
          <TabTitle>{t.title}</TabTitle>
          <TabClose $active={t.active} />
        </Tab>
      ))}
      <NewTab />
      <WindowControls>
        <MinButton />
        <RestoreButton />
        <CloseButton />
      </WindowControls>
    </TabStrip>
    <Toolbar>
      <NavButton>
        <svg width="16" height="14" viewBox="0 0 16 14"><path d="M7 1L2 7l5 6M2 7h14" fill="none" stroke="#555" strokeWidth="2.600" /></svg>
      </NavButton>
      <NavButton>
        <svg width="16" height="14" viewBox="0 0 16 14"><path d="M9 1l5 6-5 6M14 7H0" fill="none" stroke="#c4c4c4" strokeWidth="2.600" /></svg>
      </NavButton>
      <NavButton>
        <svg width="16" height="16" viewBox="0 0 16 16"><path d="M13.500 10.500A6 6 0 1 1 12.500 4" fill="none" stroke="#555" strokeWidth="2.600" /><path d="M15.500 1v6.500H9z" fill="#555" /></svg>
      </NavButton>
      <NavButton>
        <svg width="16" height="15" viewBox="0 0 16 15"><path d="M8 0L0 7.500l1.300 1L8 2.500l6.700 6 1.300-1L13 4.800V1h-2v2zM3 9v6h3.500v-4h3v4H13V9L8 4z" fill="#5a5a5a" /></svg>
      </NavButton>
      <Omnibox>
        <Doc s={15} />
        <UrlText><b>localhost</b>:8000/Project.html</UrlText>
        <Star />
      </Omnibox>
      <ExtButton><AmazonIcon s={20} /></ExtButton>
      <ExtButton>
        <svg width="20" height="20" viewBox="0 0 20 20"><path d="M10 0l2 3 3-2 1 4 4 0-2 3 2 3-3 1 1 4-4-1-1 4-3-3-3 3-1-4-4 1 1-4-3-1 2-3-2-3 4 0 1-4 3 2z" fill="#b81e26" /><rect x="5" y="7" width="10" height="6" fill="#f4e0d0" /></svg>
      </ExtButton>
      <ExtButton>
        <svg width="20" height="20" viewBox="0 0 20 20"><path d="M6 .5h8L19.500 6v8L14 19.500H6L.5 14V6z" fill="#d4141c" stroke="#888" /><path d="M10 4v6" stroke="#fff" strokeWidth="2.400" /><path d="M6.500 7a5 5 0 1 0 7 0" fill="none" stroke="#fff" strokeWidth="2.200" /></svg>
      </ExtButton>
      <ExtButton>
        <NbBox>Nb</NbBox>
      </ExtButton>
      <ExtButton>
        <svg width="14" height="13" viewBox="0 0 14 13" fill="#555"><rect width="14" height="3" /><rect y="5" width="14" height="3" /><rect y="10" width="14" height="3" /></svg>
      </ExtButton>
    </Toolbar>
    <BookmarkBar>
      {BOOKMARKS.map((b) => (
        <Bookmark key={b.label} $w={b.w}>
          <BookmarkIcon>{b.icon}</BookmarkIcon>
          <span>{b.label}</span>
        </Bookmark>
      ))}
      <Chevron>»</Chevron>
    </BookmarkBar>
    <MiddleRow>
      <Page>
        <Content>
          <Title>Elasticity in U.S. Elections.</Title>
          <Columns>
            <LeftColumn>
              <CountyMap />
              <ViewTabs>
                <ViewTab $w={182} $active>General Election</ViewTab>
                <ViewTab $w={193}>Democratic Party</ViewTab>
                <ViewTab $w={190}>Republican Party</ViewTab>
              </ViewTabs>
            </LeftColumn>
            <RightColumn>
              <Treemap>
                <TreeColumn $w={49}>
                  {COL_ONE.map((c, i) => (
                    <TreeCell key={c.text} $h={c.h} $indent $last={i === COL_ONE.length - 1}>{c.text}</TreeCell>
                  ))}
                </TreeColumn>
                <TreeColumn $w={94}>
                  {COL_TWO.map((c, i) => (
                    <TreeCell key={c.text} $h={c.h} $last={i === COL_TWO.length - 1}>{c.text}</TreeCell>
                  ))}
                </TreeColumn>
                <TreeColumn $w={412}>
                  <TreeRow $h={117}>
                    {TOP_ROW.map((c) => <TreeCell key={c.text} $w={c.w}>{c.text}</TreeCell>)}
                  </TreeRow>
                  <TreeCell $h={85}>Fairbanks North Star</TreeCell>
                  <TreeCell $h={276} $strong $last>Anchorage</TreeCell>
                </TreeColumn>
              </Treemap>
              <PopulationSelect>
                <span>Resident Population</span>
                <SelectArrow>▼</SelectArrow>
              </PopulationSelect>
            </RightColumn>
          </Columns>
        </Content>
        <SnipHint>Full-screen Snip</SnipHint>
      </Page>
      <VScroll><VThumb /></VScroll>
    </MiddleRow>
    <HScroll><HThumb /></HScroll>
    <Taskbar>
      {TASKS.map((t, i) => (
        <TaskButton key={i} $w={t.w} $ml={t.ml} $state={t.state}>{t.icon}</TaskButton>
      ))}
      <TraySection>
        <KeyboardSlot><KeyboardIcon /></KeyboardSlot>
        <ClusterIcon />
        <TrayList>
          {TRAY.map((icon, i) => <TrayItem key={i}>{icon}</TrayItem>)}
        </TrayList>
        <Clock>10:01 PM<br />5/1/2014</Clock>
      </TraySection>
    </Taskbar>
  </Screen>
);

export default App;
